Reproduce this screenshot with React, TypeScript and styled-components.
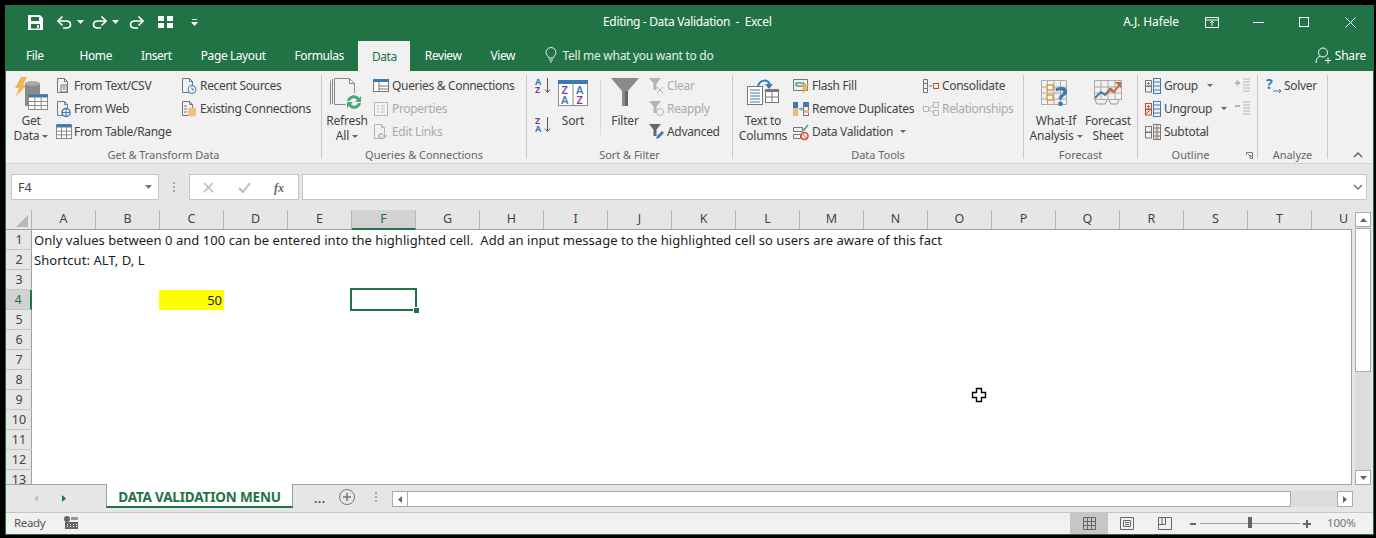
import { FC, ReactNode } from "react";
import styled, { createGlobalStyle } from "styled-components";

const GREEN = "#217346";
const GRAY = "#777";
const BLUE = "#3d7ab5";
const PURPLE = "#7c3fa8";
const ORANGE = "#e39a3b";
const FADED = "#b4b4b4";

const GlobalStyle = createGlobalStyle`
  * { box-sizing: border-box; }
  html, body { margin: 0; padding: 0; background: #000; }
  body { font-family: "Noto Sans", "Open Sans", sans-serif; font-size: 12px; color: #444; }
`;

const Frame = styled.div`
  width: 1376px;
  height: 538px;
  background: #000;
  padding: 5px 2px 3px 5px;
  overflow: hidden;
`;

const Window = styled.div`
  height: 530px;
  border: 1px solid ${GREEN};
  background: #e6e6e6;
  display: flex;
  flex-direction: column;
`;

const TitleBar = styled.div`
  height: 32px;
  flex: none;
  background: ${GREEN};
  color: #fff;
  display: flex;
  align-items: center;
  padding-left: 22px;
`;

const Qat = styled.div`
  width: 575px;
  display: flex;
  align-items: center;
  svg { display: block; }
`;

const Title = styled.div`
  white-space: pre;
  letter-spacing: -0.33px;
  flex: 1;
  margin-bottom: 1px;
`;

const User = styled.div`
  margin-right: 10px;
  margin-bottom: 1px;
  letter-spacing: -0.1px;
`;

const WinButton = styled.div`
  width: 46px;
  height: 32px;
  display: flex;
  align-items: center;
  justify-content: center;
`;

const TabBar = styled.div`
  height: 33px;
  flex: none;
  background: ${GREEN};
  display: flex;
  align-items: flex-end;
  padding-left: 5.5px;
`;

const Tab = styled.div<{ $active?: boolean; $gap?: number }>`
  height: ${(p) => (p.$active ? 30 : 33)}px;
  padding: ${(p) => (p.$active ? "0" : "1px 14.5px 0")};
  width: ${(p) => (p.$active ? "52px" : "auto")};
  margin-right: ${(p) => p.$gap ?? 0}px;
  display: flex;
  align-items: center;
  justify-content: center;
  letter-spacing: -0.42px;
  color: ${(p) => (p.$active ? GREEN : "#fff")};
  background: ${(p) => (p.$active ? "#f1f1f1" : "transparent")};
`;

const TellMe = styled.div`
  display: flex;
  align-items: center;
  gap: 6px;
  margin-left: 15px;
  height: 33px;
  padding-top: 1px;
  color: #e3efe8;
  letter-spacing: -0.28px;
`;

const Share = styled.div`
  margin-left: auto;
  display: flex;
  align-items: center;
  gap: 4px;
  height: 33px;
  padding: 1px 7px 0 0;
  color: #fff;
  letter-spacing: -0.2px;
`;

const Ribbon = styled.div`
  height: 93px;
  flex: none;
  background: #f1f1f1;
  border-bottom: 1px solid #d2d2d2;
  padding-top: 4px;
  display: flex;
  align-items: flex-start;
`;

const Group = styled.div<{ $w: number; $pad?: number }>`
  width: ${(p) => p.$w}px;
  height: 84px;
  flex: none;
  border-right: 1px solid #c8c8c8;
  padding-left: ${(p) => p.$pad ?? 0}px;
  position: relative;
  display: flex;
  flex-direction: column;
`;

const GroupBody = styled.div`
  height: 73px;
  flex: none;
  margin-top: -1px;
  display: flex;
`;

const GroupLabel = styled.div<{ $shift?: number; $trim?: number }>`
  height: 16px;
  flex: none;
  line-height: 16px;
  font-size: 11px;
  letter-spacing: -0.03px;
  text-align: center;
  color: #666;
  margin-left: ${(p) => -(p.$shift ?? 0)}px;
  margin-right: ${(p) => p.$trim ?? 0}px;
`;

const Launcher = styled.div`
  position: absolute;
  right: 4px;
  bottom: 0;
  line-height: 0;
`;

const Big = styled.div<{ $w: number }>`
  width: ${(p) => p.$w}px;
  flex: none;
  display: flex;
  flex-direction: column;
  align-items: center;
  line-height: 15px;
  text-align: center;
  letter-spacing: -0.2px;
  white-space: nowrap;
`;

const BigIcon = styled.div<{ $top: number }>`
  height: 39px;
  flex: none;
  display: flex;
  align-items: flex-start;
  justify-content: center;
  padding-top: ${(p) => p.$top}px;
  svg { display: block; }
`;

const Caret = styled.span<{ $gap?: number }>`
  display: inline-block;
  width: 0;
  height: 0;
  margin-left: ${(p) => p.$gap ?? 3}px;
  vertical-align: 2px;
  border-left: 3px solid transparent;
  border-right: 3px solid transparent;
  border-top: 3px solid #666;
`;

const Column = styled.div<{ $w?: number; $left?: number }>`
  width: ${(p) => (p.$w ? `${p.$w}px` : "auto")};
  margin-left: ${(p) => p.$left ?? 0}px;
  flex: none;
  display: flex;
  flex-direction: column;
`;

const Small = styled.div<{ $off?: boolean; $slot?: number }>`
  height: 23px;
  display: flex;
  align-items: center;
  white-space: nowrap;
  letter-spacing: -0.32px;
  color: ${(p) => (p.$off ? "#a9a9a9" : "#444")};
  & > svg {
    flex: none;
    display: block;
    margin-right: ${(p) => (p.$slot ?? 19) - 16}px;
  }
`;

const VRule = styled.div`
  width: 1px;
  height: 55px;
  margin: 6px 0 0 5px;
  background: #d8d8d8;
  flex: none;
`;

const SortStack = styled.div`
  width: 16px;
  flex: none;
  display: flex;
  flex-direction: column;
  gap: 22px;
  padding-top: 3px;
`;

const Collapse = styled.div`
  margin: 77px 0 0 25px;
  line-height: 0;
`;

const FormulaBand = styled.div`
  height: 46px;
  flex: none;
  padding: 10px 6px 0 5px;
  display: flex;
  align-items: flex-start;
`;

const NameBox = styled.div`
  width: 148px;
  height: 26px;
  background: #fff;
  border: 1px solid #c6c6c6;
  display: flex;
  align-items: center;
  justify-content: space-between;
  padding: 0 6px;
  font-size: 12.5px;
`;

const BandDots = styled.div`
  width: 30px;
  height: 26px;
  display: flex;
  align-items: center;
  justify-content: center;
`;

const FxBox = styled.div`
  width: 110px;
  height: 26px;
  background: #fff;
  border: 1px solid #c6c6c6;
  display: flex;
  align-items: center;
  justify-content: space-between;
  padding: 0 11px 0 13px;
`;

const FormulaInput = styled.div`
  flex: 1;
  height: 26px;
  margin-left: 3px;
  background: #fff;
  border: 1px solid #c6c6c6;
  display: flex;
  align-items: center;
  justify-content: flex-end;
  padding-right: 3px;
`;

const SheetArea = styled.div`
  height: 275px;
  flex: none;
  display: flex;
`;

const SheetMain = styled.div`
  width: 1346px;
  flex: none;
  display: flex;
  flex-direction: column;
`;

const ColHeaders = styled.div`
  height: 20px;
  flex: none;
  display: flex;
  overflow: hidden;
`;

const Corner = styled.div`
  width: 26px;
  flex: none;
  height: 20px;
  border-right: 1px solid #b5b5b5;
  border-bottom: 1px solid #9f9f9f;
  display: flex;
  align-items: flex-end;
  justify-content: flex-end;
  padding: 0 3px 2px 0;
  line-height: 0;
`;

const ColHead = styled.div<{ $active?: boolean }>`
  width: 64px;
  flex: none;
  height: 20px;
  text-align: center;
  line-height: 18px;
  font-size: 12.5px;
  color: ${(p) => (p.$active ? GREEN : "#444")};
  background: ${(p) => (p.$active ? "#d2d2d2" : "transparent")};
  border-right: 1px solid #b5b5b5;
  border-bottom: ${(p) => (p.$active ? `2px solid ${GREEN}` : "1px solid #9f9f9f")};
`;

const SheetBody = styled.div`
  flex: 1;
  min-height: 0;
  display: flex;
  overflow: hidden;
  border-bottom: 1px solid #9f9f9f;
  border-right: 1px solid #9f9f9f;
`;

const RowHeads = styled.div`
  width: 26px;
  flex: none;
  border-right: 1px solid #9f9f9f;
`;

const RowHead = styled.div<{ $active?: boolean }>`
  height: 20px;
  text-align: center;
  line-height: 20px;
  font-size: 12.5px;
  margin-right: -1px;
  color: ${(p) => (p.$active ? GREEN : "#444")};
  background: ${(p) => (p.$active ? "#d2d2d2" : "transparent")};
  border-bottom: 1px solid #c6c6c6;
  border-right: ${(p) => (p.$active ? `2px solid ${GREEN}` : "none")};
`;

const Cells = styled.div`
  flex: 1;
  background: #fff;
  position: relative;
`;

const SheetRow = styled.div`
  height: 20px;
  display: grid;
  grid-template-columns: repeat(20, 64px);
  font-size: 13px;
  line-height: 20px;
  color: #1c1c1c;
`;

const TextCell = styled.div`
  grid-column: 1 / -1;
  padding-left: 2px;
  white-space: pre;
  letter-spacing: 0.045px;
`;

const ValueCell = styled.div<{ $col: number }>`
  grid-column: ${(p) => p.$col};
  background: #ff0;
  margin-left: -1px;
  text-align: right;
  padding-right: 2px;
`;

const Selection = styled.div<{ $col: number }>`
  grid-column: ${(p) => p.$col};
  position: relative;
  margin: -2px -1px -1px -2px;
  border: 2px solid ${GREEN};
  &::after {
    content: "";
    position: absolute;
    right: -4px;
    bottom: -4px;
    width: 5px;
    height: 5px;
    background: ${GREEN};
    border: 1px solid #fff;
    border-width: 1px 0 0 1px;
  }
`;

const Pointer = styled.div`
  position: absolute;
  left: 939px;
  top: 157px;
  line-height: 0;
`;

const VScroll = styled.div`
  width: 16px;
  margin: 2px 0 0 3px;
  height: 273px;
  flex: none;
  display: flex;
  flex-direction: column;
  background: #dcdcdc;
`;

const ScrollButton = styled.div<{ $h?: number }>`
  width: 16px;
  height: ${(p) => p.$h ?? 15}px;
  flex: none;
  background: #fff;
  border: 1px solid #ababab;
  display: flex;
  align-items: center;
  justify-content: center;
  line-height: 0;
`;

const VThumb = styled.div`
  height: 144px;
  flex: none;
  background: #fff;
  border: 1px solid #ababab;
  margin-top: 1px;
`;

const Track = styled.div`
  flex: 1;
`;

const SheetTabs = styled.div`
  height: 27px;
  flex: none;
  display: flex;
  align-items: flex-start;
`;

const TabNav = styled.div`
  width: 100px;
  height: 26px;
  flex: none;
  display: flex;
  align-items: center;
  gap: 24px;
  padding-left: 28px;
  line-height: 0;
`;

const SheetTab = styled.div`
  width: 187px;
  height: 24px;
  flex: none;
  margin-top: -1px;
  background: #fff;
  border: 1px solid #9f9f9f;
  border-top: none;
  border-bottom: 2px solid ${GREEN};
  text-align: center;
  line-height: 26px;
  font-size: 13.5px;
  font-weight: 700;
  letter-spacing: -0.16px;
  color: ${GREEN};
`;

const More = styled.div`
  width: 46px;
  height: 24px;
  flex: none;
  padding-left: 21px;
  font-weight: 700;
  color: ${GREEN};
  line-height: 27px;
  letter-spacing: 0.5px;
`;

const PlusCircle = styled.div`
  width: 30px;
  height: 24px;
  flex: none;
  display: flex;
  align-items: center;
  line-height: 0;
`;

const TabDots = styled.div`
  width: 23px;
  height: 24px;
  flex: none;
  display: flex;
  align-items: center;
  line-height: 0;
  padding-left: 6px;
`;

const HScroll = styled.div`
  width: 961px;
  height: 16px;
  margin-top: 6px;
  flex: none;
  background: #dcdcdc;
  display: flex;
`;

const HThumb = styled.div`
  width: 883px;
  flex: none;
  background: #fff;
  border: 1px solid #ababab;
  border-left: none;
`;

const StatusBar = styled.div`
  height: 22px;
  flex: none;
  background: #f1f1f1;
  border-top: 1px solid #c6c6c6;
  display: flex;
  align-items: center;
  padding: 0 0 0 8px;
  font-size: 11.5px;
  color: #555;
`;

const Ready = styled.div`
  width: 50px;
  margin-bottom: 3px;
  letter-spacing: -0.35px;
`;

const ViewButton = styled.div<{ $active?: boolean }>`
  width: 38px;
  height: 21px;
  display: flex;
  align-items: center;
  justify-content: center;
  background: ${(p) => (p.$active ? "#c6c6c6" : "transparent")};
  line-height: 0;
`;

const StatusRight = styled.div`
  margin-left: auto;
  display: flex;
  align-items: center;
`;

const ViewGap = styled.div`
  width: 5px;
`;

const ZoomSlider = styled.div`
  width: 100px;
  height: 1px;
  margin: 0 3px;
  background: #a0a0a0;
  position: relative;
`;

const ZoomThumb = styled.div`
  position: absolute;
  left: 48px;
  top: -6px;
  width: 4px;
  height: 11px;
  background: #666;
`;

const ZoomSign = styled.div`
  width: 8px;
  display: flex;
  justify-content: center;
  line-height: 0;
`;

const ZoomValue = styled.div`
  width: 62px;
  padding-left: 16px;
  margin-bottom: 2px;
  color: #777;
  letter-spacing: -0.2px;
`;

const QatGap = styled.span<{ $w: number }>`
  display: block;
  width: ${(p) => p.$w}px;
  flex: none;
`;

/* ---- drawings ---- */

const Ico: FC<{ w?: number; h?: number; children: ReactNode }> = ({ w = 16, h = 16, children }) => (
  <svg width={w} height={h} viewBox={`0 0 ${w} ${h}`} fill="none" overflow="visible">
    {children}
  </svg>
);

const Page = ({ c = GRAY }: { c?: string }) => (
  <path d="M1.5.5h7l3 3v11h-10z M8.5.5v3h3" stroke={c} />
);

const Table = ({ x, y, w, h, head = BLUE, line = "#8a8a8a" }: { x: number; y: number; w: number; h: number; head?: string; line?: string }) => (
  <g>
    <rect x={x} y={y} width={w} height={h} fill="#fff" stroke={line} />
    <rect x={x} y={y} width={w} height={3} fill={head} />
    {[1, 2].map((i) => (
      <path key={`h${i}`} d={`M${x} ${y + 3 + ((h - 3) * i) / 3}h${w}`} stroke={line} />
    ))}
    {[1, 2].map((i) => (
      <path key={`v${i}`} d={`M${x + (w * i) / 3} ${y + 3}v${h - 3}`} stroke={line} />
    ))}
  </g>
);

const GetDataIcon = () => (
  <Ico w={34} h={34}>
    <path d="M7 0h6L9 8h4L2 19l3-8H1z" fill="#eeb455" />
    <path d="M11 7c0-3 15-3 15 0v22H11z" fill="#8a8a8a" />
    <ellipse cx="18.5" cy="6.5" rx="7.5" ry="2.5" fill="#a9a9a9" />
    <Table x={14.5} y={17.5} w={19} h={15} />
  </Ico>
);

const RefreshIcon = () => (
  <Ico w={34} h={34}>
    <path d="M.5 2.5v24M2.5 1v25M4.5.5h15l5 5v21h-20z" stroke="#8a8a8a" />
    <path d="M19.5.5v5h5" stroke="#8a8a8a" />
    <circle cx="24" cy="24" r="9" fill="#f1f1f1" />
    <path d="M17 23c1-6 9-8 12-3l2-2v6h-6l2-2c-2-3-6-2-7 1zM31 25c-1 6-9 8-12 3l-2 2v-6h6l-2 2c2 3 6 2 7-1z" fill="#4ba67a" />
  </Ico>
);

const SortSmall = ({ first, second }: { first: string; second: string }) => (
  <Ico w={16} h={17}>
    <text x="0" y="8" fontSize="9" fontWeight="700" fill={first === "A" ? BLUE : PURPLE} fontFamily="Noto Sans">{first}</text>
    <text x="0" y="16" fontSize="9" fontWeight="700" fill={second === "A" ? BLUE : PURPLE} fontFamily="Noto Sans">{second}</text>
    <path d="M12.5 1v14M10 12.5l2.5 3 2.5-3" stroke="#555" />
  </Ico>
);

const SortBigIcon = () => (
  <Ico w={30} h={26}>
    <rect x=".5" y=".5" width="29" height="25" fill="#fff" stroke="#8a8a8a" />
    <rect x="0" y="0" width="30" height="4" fill={BLUE} />
    <path d="M15 4v22" stroke="#8a8a8a" />
    <text x="3.5" y="14" fontSize="11" fontWeight="600" fill={PURPLE} fontFamily="Noto Sans">Z</text>
    <text x="3" y="24" fontSize="11" fontWeight="600" fill={BLUE} fontFamily="Noto Sans">A</text>
    <text x="18" y="14" fontSize="11" fontWeight="600" fill={BLUE} fontFamily="Noto Sans">A</text>
    <text x="18.5" y="24" fontSize="11" fontWeight="600" fill={PURPLE} fontFamily="Noto Sans">Z</text>
  </Ico>
);

const FilterIcon = () => (
  <Ico w={28} h={28}>
    <path d="M0 0h28L17 13v15h-6V13z" fill="#8a8a8a" />
    <path d="M14 13h3v15h-3z" fill="#666" />
  </Ico>
);

const SmallFunnel = ({ c }: { c: string }) => <path d="M0 0h12L7.5 5.5V12h-3V5.5z" fill={c} />;

const TextColumnsIcon = () => (
  <Ico w={32} h={28}>
    <path d="M11 8c2-7 10-7 12-1" stroke={BLUE} strokeWidth="2" />
    <path d="M18 6h8l-4 5z" fill={BLUE} />
    <rect x=".5" y="8.5" width="15" height="18" fill="#fff" stroke="#777" />
    <path d="M3 12h10M3 15h10M3 18h10M3 21h10M3 24h10" stroke={BLUE} />
    <rect x="18.5" y="11.5" width="13" height="13" fill="#fff" stroke="#777" />
    <rect x="18" y="11" width="14" height="3" fill="#777" />
    <path d="M25 14v10M18 19h13" stroke="#777" />
  </Ico>
);

const WhatIfIcon = () => (
  <Ico w={30} h={30}>
    <path d="M.5.5h25v24H.5zM.5 7h25M.5 13h25M.5 19h25M6.5.5v24M13 .5v24M19.5.5v24" stroke="#aaa" />
    <rect x="6" y="5" width="6" height="5" fill="#fff" stroke={ORANGE} strokeWidth="1.5" />
    <rect x="6" y="15" width="6" height="5" fill="#fff" stroke={ORANGE} strokeWidth="1.5" />
    <text x="14" y="26" fontSize="26" fontWeight="700" fill={BLUE} fontFamily="Noto Sans">?</text>
  </Ico>
);

const ForecastIcon = () => (
  <Ico w={29} h={26}>
    <path d="M.5.5h27v19H.5zM.5 7h27M.5 13h27M7 .5v19M14 .5v19M21 .5v19" stroke="#aaa" />
    <path d="M1 18l6-6 4 3 5-6 3 3" stroke={BLUE} strokeWidth="2" />
    <path d="M12 14l5-5 3 3 6-8" stroke="#d2653a" strokeWidth="2" />
    <path d="M21 2h6v6z" fill="#d2653a" />
    <path d="M1 20l2 4h8l2-4M15 20l2 4h6l2-4" stroke="#999" />
  </Ico>
);

const OutlineIcon = ({ red }: { red?: boolean }) => (
  <Ico>
    <rect x=".5" y="2.5" width="6" height="5.5" stroke={red ? "#d24726" : GRAY} />
    <rect x=".5" y="8.5" width="6" height="5.5" stroke={red ? "#d24726" : GRAY} />
    {red && <path d="M1 13l5-5" stroke="#d24726" />}
    <path d="M2 5.5h3M3.5 4v3" stroke={GRAY} />
    <rect x="8.5" y=".5" width="7" height="15" stroke={BLUE} />
    <path d="M8.5 4h7M8.5 8h7M8.5 12h7" stroke={BLUE} />
  </Ico>
);

const MiniCaret = () => (
  <svg width="7" height="4" viewBox="0 0 7 4">
    <path d="M0 0h7L3.5 4z" fill="#fff" />
  </svg>
);

const UndoShape = ({ flip }: { flip?: boolean }) => (
  <svg width="15" height="13" viewBox="0 0 15 13" style={flip ? { transform: "scaleX(-1)" } : undefined}>
    <path d="M2 5h7c6 0 6 7 0 7H6" stroke="#fff" strokeWidth="1.6" fill="none" />
    <path d="M5.5 .5L1 5l4.5 4.5" stroke="#fff" strokeWidth="1.6" fill="none" />
  </svg>
);

const colNames = "ABCDEFGHIJKLMNOPQRSTU".split("");
const rowNames = Array.from({ length: 13 }, (_, i) => i + 1);

const App = () => (
  <Frame>
    <GlobalStyle />
    <Window>
      <TitleBar>
        <Qat>
          <svg width="15" height="15" viewBox="0 0 15 15">
            <path d="M0 0h12l3 3v12H0z" fill="#fff" />
            <path d="M3 2h8v4H3zM3 9h9v4.500H3z" fill={GREEN} />
            <path d="M9 10h2v3H9z" fill="#fff" />
          </svg>
          <QatGap $w={14} />
          <UndoShape />
          <QatGap $w={5} />
          <MiniCaret />
          <QatGap $w={8} />
          <UndoShape flip />
          <QatGap $w={5} />
          <MiniCaret />
          <QatGap $w={10} />
          <UndoShape flip />
          <QatGap $w={14} />
          <svg width="15" height="12" viewBox="0 0 15 12">
            <path d="M0 0h6v5H0zM9 0h6v5H9zM0 7h6v5H0zM9 7h6v5H9z" fill="#fff" />
          </svg>
          <QatGap $w={18} />
          <svg width="7" height="7" viewBox="0 0 7 7">
            <path d="M1 0h5v1H1zM0 3h7L3.500 7z" fill="#fff" />
          </svg>
        </Qat>
        <Title>Editing - Data Validation  -  Excel</Title>
        <User>A.J. Hafele</User>
        <WinButton>
          <svg width="14" height="11" viewBox="0 0 14 11" fill="none" stroke="#fff">
            <path d="M.5.5h13v10H.5zM.5 3h13" />
            <path d="M7 9V4M5 6l2-2 2 2" />
          </svg>
        </WinButton>
        <WinButton>
          <svg width="11" height="1" viewBox="0 0 11 1"><path d="M0 0h11v1H0z" fill="#fff" /></svg>
        </WinButton>
        <WinButton>
          <svg width="10" height="10" viewBox="0 0 10 10"><rect x=".5" y=".5" width="9" height="9" stroke="#fff" fill="none" /></svg>
        </WinButton>
        <WinButton>
          <svg width="11" height="11" viewBox="0 0 11 11"><path d="M.5.5l10 10M10.500.5l-10 10" stroke="#fff" fill="none" /></svg>
        </WinButton>
      </TitleBar>

      <TabBar>
        <Tab $gap={7}>File</Tab>
        <Tab>Home</Tab>
        <Tab>Insert</Tab>
        <Tab>Page Layout</Tab>
        <Tab>Formulas</Tab>
        <Tab $active>Data</Tab>
        <Tab>Review</Tab>
        <Tab>View</Tab>
        <TellMe>
          <svg width="12" height="16" viewBox="0 0 12 16" fill="none" stroke="#e3efe8">
            <path d="M3.500 11C3.500 8.500 1 8 1 5.500a5 5 0 0 1 10 0C11 8 8.500 8.500 8.500 11zM4 13h4M5 15h2" />
          </svg>
          Tell me what you want to do
        </TellMe>
        <Share>
          <svg width="16" height="17" viewBox="0 0 16 17" fill="none" stroke="#fff">
            <circle cx="8" cy="5.500" r="4.500" />
            <path d="M1 16c0-4 2-6 4-7M10 13.500h6M13 10.500v6" />
          </svg>
          Share
        </Share>
      </TabBar>

      <Ribbon>
        <Group $w={316}>
          <GroupBody>
            <Big $w={50}>
              <BigIcon $top={3}><GetDataIcon /></BigIcon>
              Get
              <span>Data<Caret /></span>
            </Big>
            <Column $w={125}>
              <Small $slot={18}><Ico><Page /><path d="M5 7h6v7H5zM6.500 9h3M6.500 11h3" stroke={GRAY} fill="#f1f1f1" /></Ico>From Text/CSV</Small>
              <Small $slot={18}><Ico><Page /><circle cx="10" cy="11.500" r="4" fill="#f1f1f1" stroke={BLUE} strokeWidth="1.500" /><path d="M6 11.500h8M10 8v7" stroke={BLUE} /></Ico>From Web</Small>
              <Small $slot={18}><Ico><Table x={.5} y={.5} w={15} h={14} /></Ico>From Table/Range</Small>
            </Column>
            <Column>
              <Small><Ico><Page /><circle cx="11" cy="11.500" r="4" fill="#f1f1f1" stroke={BLUE} /><path d="M11 9.500v2h2" stroke={BLUE} /></Ico>Recent Sources</Small>
              <Small><Ico><Page /><path d="M7 8c0-2 8-2 8 0v6c0 2-8 2-8 0z" fill="#eec27e" /><path d="M3 5h3M3 8h3M3 11h3" stroke={GRAY} /></Ico>Existing Connections</Small>
            </Column>
          </GroupBody>
          <GroupLabel>Get &amp; Transform Data</GroupLabel>
        </Group>

        <Group $w={205}>
          <GroupBody>
            <Big $w={50}>
              <BigIcon $top={4}><RefreshIcon /></BigIcon>
              Refresh
              <span>All<Caret /></span>
            </Big>
            <Column $left={1}>
              <Small><Ico><rect x=".5" y="1.500" width="15" height="12" fill="#fff" stroke={GRAY} /><rect x="0" y="1" width="16" height="3" fill={BLUE} /><path d="M6 4v10M6 8h10M6 11h10" stroke={GRAY} /></Ico>Queries &amp; Connections</Small>
              <Small $off><Ico><rect x="1.500" y="1.500" width="13" height="13" fill="#f6f6f6" stroke={FADED} /><path d="M4 5h2M8 5h4M4 8h2M8 8h4M4 11h2M8 11h4" stroke={FADED} /></Ico>Properties</Small>
              <Small $off><Ico><Page c={FADED} /><path d="M6 12a2 2 0 0 1 2-2h2M10 14H8a2 2 0 0 1-2-2M10 12h4" stroke={FADED} strokeWidth="1.500" /></Ico>Edit Links</Small>
            </Column>
          </GroupBody>
          <GroupLabel>Queries &amp; Connections</GroupLabel>
        </Group>

        <Group $w={206} $pad={8}>
          <GroupBody>
            <SortStack>
              <SortSmall first="A" second="Z" />
              <SortSmall first="Z" second="A" />
            </SortStack>
            <Big $w={44}>
              <BigIcon $top={6}><SortBigIcon /></BigIcon>
              Sort
            </Big>
            <VRule />
            <Big $w={48}>
              <BigIcon $top={4}><FilterIcon /></BigIcon>
              Filter
            </Big>
            <Column>
              <Small $off $slot={18}><Ico><SmallFunnel c={FADED} /><path d="M8 9l6 6M14 9l-6 6" stroke={FADED} /></Ico>Clear</Small>
              <Small $off $slot={18}><Ico><SmallFunnel c={FADED} /><circle cx="11" cy="11" r="3.500" stroke={FADED} /></Ico>Reapply</Small>
              <Small $slot={18}><Ico><SmallFunnel c="#666" /><path d="M7 15l1-3 5-5 2 2-5 5z" fill={BLUE} /></Ico>Advanced</Small>
            </Column>
          </GroupBody>
          <GroupLabel $shift={8}>Sort &amp; Filter</GroupLabel>
        </Group>

        <Group $w={291}>
          <GroupBody>
            <Big $w={60}>
              <BigIcon $top={4}><TextColumnsIcon /></BigIcon>
              Text to
              <span>Columns</span>
            </Big>
            <Column $w={130}>
              <Small><Ico><path d="M.5 1.500h14v11H.5z" stroke={GRAY} /><path d="M3 5h8v3H3z" stroke={GREEN} /><path d="M11 6h5l-3 4h2l-5 6 1-4H9z" fill="#eeb455" /></Ico>Flash Fill</Small>
              <Small><Ico><rect x="0" y="1" width="5" height="14" fill="#e7bd78" /><rect x="0" y="1" width="5" height="6" fill={BLUE} /><rect x="10.500" y="1.500" width="5" height="13" fill="#f1f1f1" stroke={GRAY} /><rect x="11" y="1" width="5" height="5" fill={BLUE} /><rect x="11" y="9" width="5" height="3" fill="#e7bd78" /><path d="M6 8h3M8 6.500L9.500 8 8 9.500" stroke={BLUE} /></Ico>Remove Duplicates</Small>
              <Small>
                <Ico><path d="M.5 3.500h9v4h-9zM.5 10.500h7v4h-7z" stroke={GRAY} /><path d="M9 4l2 2 4-5" stroke="#4b9a85" strokeWidth="1.500" /><circle cx="11.500" cy="12" r="3.500" fill="#f1f1f1" stroke="#d24726" strokeWidth="1.500" /><path d="M9 9.500l5 5" stroke="#d24726" /></Ico>
                Data Validation<Caret $gap={7} />
              </Small>
            </Column>
            <Column>
              <Small><Ico><path d="M.5 1.500h4v13h-4zM.5 5.500h4M.5 10.500h4" stroke={GRAY} /><path d="M6 8h3" stroke={BLUE} /><rect x="10.500" y="5.500" width="5" height="5" stroke="#d24726" /></Ico>Consolidate</Small>
              <Small $off><Ico><path d="M.5 5.500h5v5h-5zM10.500 1.500h5v5h-5zM10.500 9.500h5v5h-5zM5.500 8l5-4M5.500 8l5 4" stroke={FADED} /></Ico>Relationships</Small>
            </Column>
          </GroupBody>
          <GroupLabel>Data Tools</GroupLabel>
        </Group>

        <Group $w={114} $pad={6}>
          <GroupBody>
            <Big $w={52}>
              <BigIcon $top={6}><WhatIfIcon /></BigIcon>
              What-If
              <span>Analysis<Caret /></span>
            </Big>
            <Big $w={52}>
              <BigIcon $top={6}><ForecastIcon /></BigIcon>
              Forecast
              <span>Sheet</span>
            </Big>
          </GroupBody>
          <GroupLabel $shift={6}>Forecast</GroupLabel>
        </Group>

        <Group $w={120} $pad={7}>
          <GroupBody>
            <Column $w={90}>
              <Small><OutlineIcon />Group<Caret $gap={9} /></Small>
              <Small><OutlineIcon red />Ungroup<Caret $gap={9} /></Small>
              <Small><Ico><rect x=".5" y="2.500" width="6" height="5.500" stroke={GRAY} /><rect x=".5" y="8.500" width="6" height="5.500" stroke={GRAY} /><path d="M8.500.5h7v15h-7zM8.500 4h7M8.500 8h7M8.500 12h7M12 .5v15" stroke={GRAY} /><path d="M10 6h1M13 6h1M10 10h1M13 10h1M10 14h1M13 14h1" stroke={ORANGE} /></Ico>Subtotal</Small>
            </Column>
            <Column>
              <Small><Ico><path d="M0 5h5M2.500 2.500v5" stroke={FADED} strokeWidth="2" /><path d="M8 1h7M8 4h7M8 7h7M8 10h7M8 13h7" stroke={FADED} /></Ico></Small>
              <Small><Ico><path d="M0 5h5" stroke={FADED} strokeWidth="2" /><path d="M8 1h7M8 4h7M8 7h7M8 10h7M8 13h7" stroke={FADED} /></Ico></Small>
            </Column>
          </GroupBody>
          <GroupLabel $shift={7} $trim={14}>Outline</GroupLabel>
          <Launcher>
            <svg width="7" height="7" viewBox="0 0 7 7" fill="none" stroke="#777"><path d="M.5 3V.5H6.500V6.500H4M2 2l3 3M5 3v2H3" /></svg>
          </Launcher>
        </Group>

        <Group $w={70} $pad={8}>
          <GroupBody>
            <Column>
              <Small $slot={18}>
                <Ico>
                  <text x="0" y="11" fontSize="14" fontWeight="700" fill={BLUE} fontFamily="Noto Sans">?</text>
                  <path d="M7 13h8M13 11l2 2-2 2" stroke={BLUE} />
                </Ico>
                Solver
              </Small>
            </Column>
          </GroupBody>
          <GroupLabel $shift={8}>Analyze</GroupLabel>
        </Group>

        <Collapse>
          <svg width="10" height="6" viewBox="0 0 10 6" fill="none" stroke="#666" strokeWidth="1.500"><path d="M1 5l4-4 4 4" /></svg>
        </Collapse>
      </Ribbon>

      <FormulaBand>
        <NameBox>
          F4
          <svg width="7" height="4" viewBox="0 0 7 4"><path d="M0 0h7L3.500 4z" fill="#777" /></svg>
        </NameBox>
        <BandDots>
          <svg width="2" height="10" viewBox="0 0 2 10"><path d="M0 0h2v2H0zM0 4h2v2H0zM0 8h2v2H0z" fill="#aaa" /></svg>
        </BandDots>
        <FxBox>
          <svg width="11" height="11" viewBox="0 0 11 11"><path d="M1 1l9 9M10 1l-9 9" stroke="#bbb" strokeWidth="1.500" fill="none" /></svg>
          <svg width="13" height="11" viewBox="0 0 13 11"><path d="M1 6l4 4 7-9" stroke="#bbb" strokeWidth="2" fill="none" /></svg>
          <svg width="13" height="13" viewBox="0 0 13 13" overflow="visible">
            <text x="0" y="11" fontSize="12" fontStyle="italic" fontWeight="700" fill="#666" fontFamily="Liberation Serif">fx</text>
          </svg>
        </FxBox>
        <FormulaInput>
          <svg width="10" height="6" viewBox="0 0 10 6" fill="none" stroke="#777" strokeWidth="1.500"><path d="M1 1l4 4 4-4" /></svg>
        </FormulaInput>
      </FormulaBand>

      <SheetArea>
        <SheetMain>
          <ColHeaders>
            <Corner>
              <svg width="12" height="12" viewBox="0 0 12 12"><path d="M12 0v12H0z" fill="#b9b9b9" /></svg>
            </Corner>
            {colNames.map((c) => (
              <ColHead key={c} $active={c === "F"}>{c}</ColHead>
            ))}
          </ColHeaders>
          <SheetBody>
            <RowHeads>
              {rowNames.map((r) => (
                <RowHead key={r} $active={r === 4}>{r}</RowHead>
              ))}
            </RowHeads>
            <Cells>
              <SheetRow>
                <TextCell>Only values between 0 and 100 can be entered into the highlighted cell.  Add an input message to the highlighted cell so users are aware of this fact</TextCell>
              </SheetRow>
              <SheetRow>
                <TextCell>Shortcut: ALT, D, L</TextCell>
              </SheetRow>
              <SheetRow />
              <SheetRow>
                <ValueCell $col={3}>50</ValueCell>
                <Selection $col={6} />
              </SheetRow>
              <Pointer>
                <svg width="16" height="16" viewBox="0 0 16 16">
                  <path d="M5.500 1.500h5v4h4v5h-4v4h-5v-4h-4v-5h4z" fill="#fff" stroke="#000" strokeWidth="1.400" />
                </svg>
              </Pointer>
            </Cells>
          </SheetBody>
        </SheetMain>
        <VScroll>
          <ScrollButton>
            <svg width="7" height="4" viewBox="0 0 7 4"><path d="M0 4h7L3.500 0z" fill="#666" /></svg>
          </ScrollButton>
          <VThumb />
          <Track />
          <ScrollButton>
            <svg width="7" height="4" viewBox="0 0 7 4"><path d="M0 0h7L3.500 4z" fill="#666" /></svg>
          </ScrollButton>
        </VScroll>
      </SheetArea>

      <SheetTabs>
        <TabNav>
          <svg width="4" height="7" viewBox="0 0 4 7"><path d="M4 0v7L0 3.500z" fill="#c0c0c0" /></svg>
          <svg width="4" height="7" viewBox="0 0 4 7"><path d="M0 0v7l4-3.500z" fill={GREEN} /></svg>
        </TabNav>
        <SheetTab>DATA VALIDATION MENU</SheetTab>
        <More>...</More>
        <PlusCircle>
          <svg width="16" height="16" viewBox="0 0 16 16" fill="none" stroke="#777">
            <circle cx="8" cy="8" r="7.500" />
            <path d="M4 8h8M8 4v8" strokeWidth="1.500" />
          </svg>
        </PlusCircle>
        <TabDots>
          <svg width="2" height="10" viewBox="0 0 2 10"><path d="M0 0h2v2H0zM0 4h2v2H0zM0 8h2v2H0z" fill="#aaa" /></svg>
        </TabDots>
        <HScroll>
          <ScrollButton $h={16}>
            <svg width="4" height="7" viewBox="0 0 4 7"><path d="M4 0v7L0 3.500z" fill="#666" /></svg>
          </ScrollButton>
          <HThumb />
          <Track />
          <ScrollButton $h={16}>
            <svg width="4" height="7" viewBox="0 0 4 7"><path d="M0 0v7l4-3.500z" fill="#666" /></svg>
          </ScrollButton>
        </HScroll>
      </SheetTabs>

      <StatusBar>
        <Ready>Ready</Ready>
        <svg width="14" height="13" viewBox="0 0 14 13" style={{ marginBottom: 2 }}>
          <circle cx="3" cy="3" r="3" fill="#666" />
          <path d="M1 6h13v7H1z" fill="#666" />
          <path d="M7 1h7v3H7z" fill="#999" />
          <path d="M3 8h1v1H3zM6 8h1v1H6zM9 8h1v1H9zM12 8h1v1h-1zM3 10h1v1H3zM6 10h1v1H6zM9 10h1v1H9zM12 10h1v1h-1z" fill="#fff" />
        </svg>
        <StatusRight>
          <ViewButton $active>
            <svg width="13" height="13" viewBox="0 0 13 13" fill="none" stroke="#666"><path d="M.5.5h12v12H.5zM.5 4.500h12M.5 8.500h12M4.500.5v12M8.500.5v12" /></svg>
          </ViewButton>
          <ViewButton>
            <svg width="14" height="13" viewBox="0 0 14 13" fill="none" stroke="#666"><path d="M.5.5h13v12H.5zM3.500 3.500h7v6h-7zM5 5.500h4M5 7.500h4" /></svg>
          </ViewButton>
          <ViewButton>
            <svg width="14" height="13" viewBox="0 0 14 13" fill="none" stroke="#666"><path d="M.5.5h13v12H.5zM.5 7.500h7V.5M4 .5v7" /></svg>
          </ViewButton>
          <ViewGap />
          <ZoomSign>
            <svg width="6" height="2" viewBox="0 0 6 2"><path d="M0 0h6v2H0z" fill="#666" /></svg>
          </ZoomSign>
          <ZoomSlider><ZoomThumb /></ZoomSlider>
          <ZoomSign>
            <svg width="8" height="8" viewBox="0 0 8 8"><path d="M3 0h2v3h3v2H5v3H3V5H0V3h3z" fill="#666" /></svg>
          </ZoomSign>
          <ZoomValue>100%</ZoomValue>
        </StatusRight>
      </StatusBar>
    </Window>
  </Frame>
);

export default App;
